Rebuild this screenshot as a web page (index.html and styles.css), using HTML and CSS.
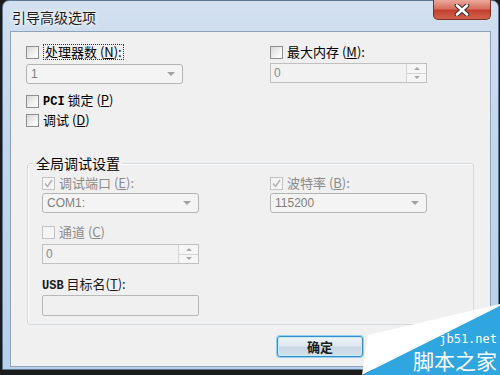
FILE: index.html
```html
<!DOCTYPE html>
<html lang="zh-CN">
<head>
	<meta charset="UTF-8">
	<title>引导高级选项</title>
	<link rel="stylesheet" href="styles.css">
</head>
<body>
<div class="window">
	<div class="titlebar">
		<span class="titlebar__title">引导高级选项</span>
		<span class="titlebar__close">
			<svg width="20" height="12" viewBox="0 0 20 12">
				<path d="M5 1.5 L15 10.5 M15 1.5 L5 10.5" stroke="#3b2a2a" stroke-width="4.6" stroke-linecap="round"/>
				<path d="M5 1.5 L15 10.5 M15 1.5 L5 10.5" stroke="#ffffff" stroke-width="2.6" stroke-linecap="round"/>
			</svg>
		</span>
	</div>

	<div class="client">
		<div class="columns">
			<div class="column">
				<label class="check">
					<span class="check__box"></span>
					<span class="check__focus">处理器数 (<u>N</u>):</span>
				</label>
				<div class="combo combo--first">
					<span>1</span>
					<span class="combo__arrow"></span>
				</div>
				<label class="check check--pci">
					<span class="check__box"></span>
					<span class="check__text"><b class="latin">PCI</b> 锁定 (<u>P</u>)</span>
				</label>
				<label class="check check--debug">
					<span class="check__box"></span>
					<span class="check__text">调试 (<u>D</u>)</span>
				</label>
			</div>
			<div class="column">
				<label class="check">
					<span class="check__box"></span>
					<span class="check__text">最大内存 (<u>M</u>):</span>
				</label>
				<div class="spin spin--memory">
					<span class="spin__value">0</span>
					<span class="spin__buttons">
						<span class="spin__up"></span>
						<span class="spin__down"></span>
					</span>
				</div>
			</div>
		</div>

		<fieldset class="group">
			<legend class="group__title">全局调试设置</legend>
			<div class="group__body">
				<div class="column">
					<label class="check check--disabled">
						<span class="check__box check__box--checked">
							<svg width="11" height="11" viewBox="0 0 11 11"><path d="M2 5.5 L4.5 8.5 L9 2" fill="none" stroke="#b4b4b4" stroke-width="1.6"/></svg>
						</span>
						<span class="check__text">调试端口 (<u>E</u>):</span>
					</label>
					<div class="combo combo--small-gap">
						<span>COM1:</span>
						<span class="combo__arrow"></span>
					</div>
					<label class="check check--disabled check--channel">
						<span class="check__box"></span>
						<span class="check__text">通道 (<u>C</u>)</span>
					</label>
					<div class="spin spin--channel">
						<span class="spin__value">0</span>
						<span class="spin__buttons">
							<span class="spin__up"></span>
							<span class="spin__down"></span>
						</span>
					</div>
					<div class="field-label"><b class="latin">USB</b> 目标名(<u>T</u>):</div>
					<div class="textbox"></div>
				</div>
				<div class="column">
					<label class="check check--disabled">
						<span class="check__box check__box--checked">
							<svg width="11" height="11" viewBox="0 0 11 11"><path d="M2 5.5 L4.5 8.5 L9 2" fill="none" stroke="#b4b4b4" stroke-width="1.6"/></svg>
						</span>
						<span class="check__text">波特率 (<u>B</u>):</span>
					</label>
					<div class="combo combo--small-gap">
						<span>115200</span>
						<span class="combo__arrow"></span>
					</div>
				</div>
			</div>
		</fieldset>

		<div class="buttons">
			<button class="button button--default">确定</button>
		</div>
	</div>
</div>

<div class="watermark">
	<svg class="watermark__shape" width="140" height="75" viewBox="0 0 140 75">
		<polygon points="2,75 8,35 140,4 140,6" fill="#ffffff"/>
		<polygon points="2,75 140,6 140,75" fill="#2fa6df"/>
	</svg>
	<div class="watermark__site">jb51.net</div>
	<div class="watermark__name">脚本之家</div>
</div>
</body>
</html>
```

FILE: styles.css
```css
body {
    margin: 0;
    width: 500px;
    height: 375px;
    overflow: hidden;
    position: relative;
    background: #1c1c1c;
    font-family: "Noto Sans CJK SC", "Liberation Sans", sans-serif;
    font-size: 13px;
    color: #000;
}

.window {
    width: 497px;
    height: 370px;
    margin-left: 2px;
    box-sizing: border-box;
    padding: 0 7px 2px 7px;
    border: 1px solid #5b7895;
    border-radius: 7px 7px 0 0;
    background: linear-gradient(#d2e0f0, #c3d6ec 40%, #b9d0ea);
    display: flex;
    flex-direction: column;
}

.titlebar {
    height: 30px;
    display: flex;
    justify-content: space-between;
    align-items: flex-start;
}

.titlebar__title {
    margin: 6px 0 0 2px;
    font-size: 14px;
    line-height: 20px;
    color: #1b1b1b;
    text-shadow: 0 0 6px #fff, 0 0 3px #fff;
}

.titlebar__close {
    width: 58px;
    height: 20px;
    margin-top: -1px;
    box-sizing: border-box;
    border: 1px solid #7a2f27;
    border-top: none;
    border-radius: 0 0 5px 5px;
    background: linear-gradient(#e9a99b, #d7705f 45%, #c3402f 55%, #d2624c);
    display: flex;
    align-items: center;
    justify-content: center;
}

.client {
    flex: 1;
    border: 1px solid #8ea3ba;
    background: #f0f0f0;
}

.columns {
    display: grid;
    grid-template-columns: 244px 1fr;
    padding: 12px 0 0 15px;
}

.column {
    display: flex;
    flex-direction: column;
    align-items: flex-start;
}

.check {
    height: 16px;
    display: flex;
    align-items: center;
    gap: 4px;
    line-height: 16px;
    white-space: nowrap;
}

.check__box {
    width: 13px;
    height: 13px;
    box-sizing: border-box;
    border: 1px solid #8e8f8f;
    background: linear-gradient(135deg, #d9d9d9, #f6f6f6 70%, #ffffff);
    display: flex;
    align-items: center;
    justify-content: center;
}

.check__focus {
    border: 1px dotted #333;
    padding: 0 1px;
    line-height: 14px;
}

.check--pci {
    margin-top: 9px;
}

.check--debug {
    margin-top: 3px;
}

.check--disabled {
    color: #8a8a8a;
}

.check--disabled .check__box {
    border-color: #c2c2c2;
    background: #f5f5f5;
}

.check--channel {
    margin-top: 11px;
}

.latin {
    font-family: "Liberation Mono", monospace;
    font-weight: bold;
    font-size: 12px;
}

u {
    text-decoration-thickness: 1px;
    text-underline-offset: 1px;
}

.combo {
    width: 157px;
    height: 20px;
    box-sizing: border-box;
    border: 1px solid #b4b4b4;
    border-radius: 3px;
    background: #f4f4f4;
    color: #7e7e7e;
    padding: 0 7px 0 4px;
    display: flex;
    align-items: center;
    justify-content: space-between;
    font-family: "Liberation Sans", sans-serif;
    font-size: 12px;
}

.combo--first {
    margin-top: 4px;
}

.combo--small-gap {
    margin-top: 2px;
}

.combo__arrow {
    width: 0;
    height: 0;
    border-left: 4px solid transparent;
    border-right: 4px solid transparent;
    border-top: 4px solid #a2a2a2;
}

.spin {
    width: 157px;
    height: 20px;
    box-sizing: border-box;
    border: 1px solid #c0c0c0;
    background: #f2f2f2;
    color: #8a8a8a;
    display: flex;
    align-items: stretch;
    justify-content: space-between;
    font-family: "Liberation Sans", sans-serif;
    font-size: 12px;
}

.spin--memory {
    margin-top: 3px;
}

.spin--channel {
    margin-top: 4px;
}

.spin__value {
    padding-left: 3px;
    line-height: 18px;
}

.spin__buttons {
    width: 19px;
    display: flex;
    flex-direction: column;
    border-left: 1px solid #d3d3d3;
}

.spin__up,
.spin__down {
    flex: 1;
    display: flex;
    align-items: center;
    justify-content: center;
    background: #f6f6f6;
}

.spin__up {
    border-bottom: 1px solid #d3d3d3;
}

.spin__up::after,
.spin__down::after {
    content: '';
    border-left: 3px solid transparent;
    border-right: 3px solid transparent;
}

.spin__up::after {
    border-bottom: 3px solid #a9a9a9;
}

.spin__down::after {
    border-top: 3px solid #a9a9a9;
}

.group {
    margin: 27px 0 0 16px;
    padding: 0;
    width: 447px;
    box-sizing: border-box;
    border: 1px solid #d5dadf;
    border-radius: 3px;
    box-shadow: inset 1px 1px 0 #fff;
}

.group__title {
    margin-left: 6px;
    padding: 0 2px;
    font-size: 14px;
    line-height: 16px;
}

.group__body {
    display: grid;
    grid-template-columns: 228px 1fr;
    padding: 4px 0 8px 14px;
}

.field-label {
    margin-top: 12px;
    line-height: 16px;
    color: #1a1a1a;
}

.textbox {
    width: 157px;
    height: 21px;
    margin-top: 1px;
    box-sizing: border-box;
    border: 1px solid #b8b8b8;
    border-radius: 2px;
    background: #f0f0f0;
}

.buttons {
    display: flex;
    margin-top: 11px;
    padding-left: 266px;
}

.button {
    width: 86px;
    height: 21px;
    font-family: "Noto Sans CJK SC", sans-serif;
    font-size: 13px;
    font-weight: bold;
    color: #1c1c1c;
    border-radius: 3px;
    padding: 0;
    line-height: 17px;
}

.button--default {
    border: 1px solid #3a8cc8;
    background: linear-gradient(#eef4f9, #dfe8f0 45%, #c9d7e3 55%, #d2e1ec);
    box-shadow: 0 0 0 1px #8fd0f4, inset 0 0 0 1px #c6ecfc;
}

.watermark {
    position: absolute;
    right: 0;
    bottom: 0;
    width: 140px;
    height: 75px;
    color: #fff;
    text-align: right;
}

.watermark__shape {
    position: absolute;
    left: 0;
    top: 0;
}

.watermark__site {
    position: relative;
    margin-top: 33px;
    padding-right: 3px;
    font-family: "DejaVu Sans Mono", monospace;
    font-size: 12px;
    line-height: 13px;
}

.watermark__name {
    position: relative;
    padding-right: 3px;
    font-size: 21px;
    line-height: 29px;
}
```
